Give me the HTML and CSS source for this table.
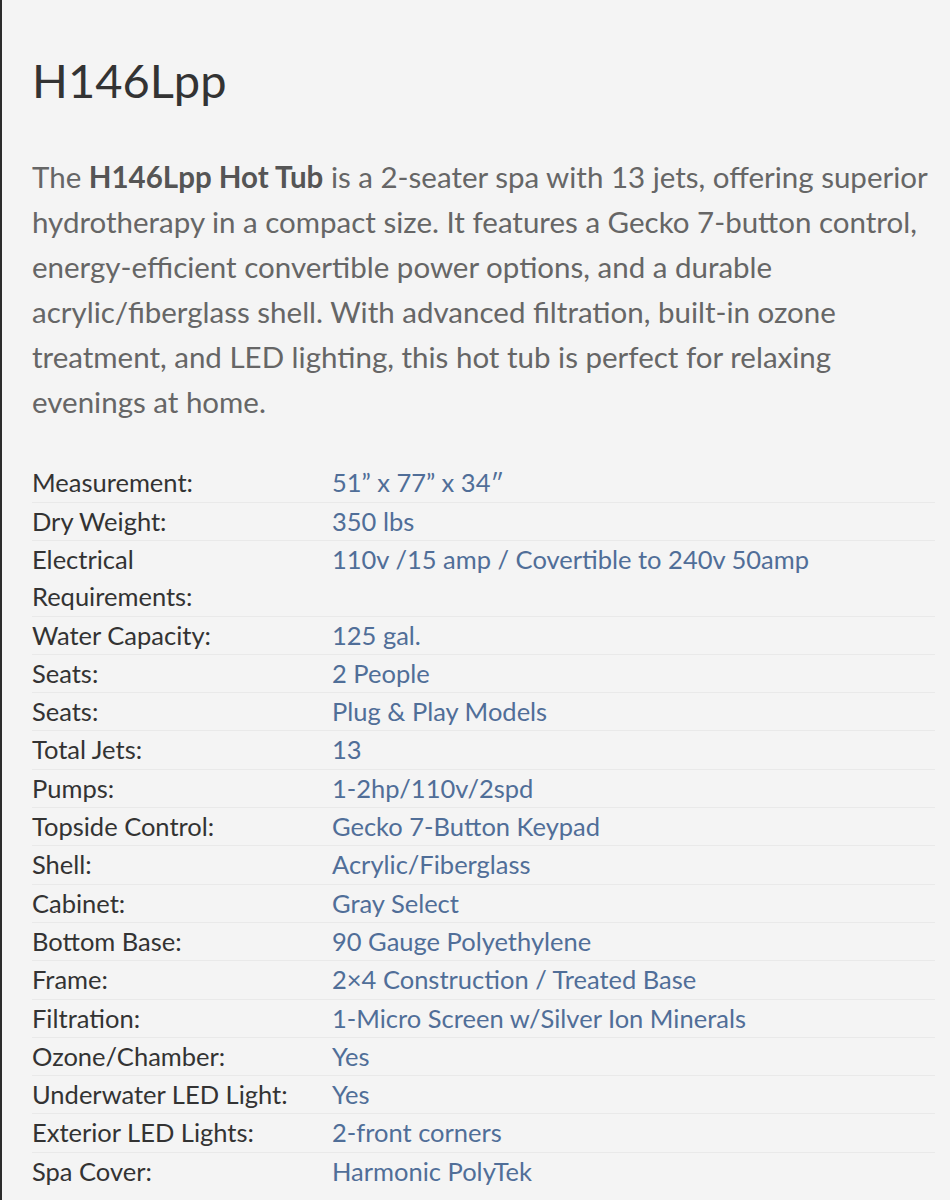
FILE: index.html
```html
<!DOCTYPE html>
<html lang="en">
<head>
  <meta charset="UTF-8" />
  <meta name="viewport" content="width=device-width, initial-scale=1" />
  <title>H146Lpp Hot Tub</title>
  <link rel="stylesheet" href="styles.css">
</head>
<body>
  <div class="container">
    <h1>H146Lpp</h1>
    <p class="descricao">
      The <strong>H146Lpp Hot Tub</strong> is a 2-seater spa with 13 jets, offering superior hydrotherapy in a compact size. It features a Gecko 7-button control, energy-efficient convertible power options, and a durable acrylic/fiberglass shell. With advanced filtration, built-in ozone treatment, and LED lighting, this hot tub is perfect for relaxing evenings at home.
    </p>

    <!-- Especificações -->
    <table class="specs">
      <tr><td>Measurement:</td><td>51” x 77” x 34″</td></tr>
      <tr><td>Dry Weight:</td><td>350 lbs</td></tr>
      <tr><td>Electrical Requirements:</td><td>110v /15 amp / Covertible to 240v 50amp</td></tr>
      <tr><td>Water Capacity:</td><td>125 gal.</td></tr>
      <tr><td>Seats:</td><td>2 People</td></tr>
      <tr><td>Seats:</td><td>Plug &amp; Play Models</td></tr>
      <tr><td>Total Jets:</td><td>13</td></tr>
      <tr><td>Pumps:</td><td>1-2hp/110v/2spd</td></tr>
      <tr><td>Topside Control:</td><td>Gecko 7-Button Keypad</td></tr>
      <tr><td>Shell:</td><td>Acrylic/Fiberglass</td></tr>
      <tr><td>Cabinet:</td><td>Gray Select</td></tr>
      <tr><td>Bottom Base:</td><td>90 Gauge Polyethylene</td></tr>
      <tr><td>Frame:</td><td>2×4 Construction / Treated Base</td></tr>
      <tr><td>Filtration:</td><td>1-Micro Screen w/Silver Ion Minerals</td></tr>
      <tr><td>Ozone/Chamber:</td><td>Yes</td></tr>
      <tr><td>Underwater LED Light:</td><td>Yes</td></tr>
      <tr><td>Exterior LED Lights:</td><td>2-front corners</td></tr>
      <tr><td>Spa Cover:</td><td>Harmonic PolyTek</td></tr>
    </table>
  </div>
</body>
</html>
```

FILE: styles.css
```css
body {
  background: #f4f4f4;
  font-family: Lato, 'Open Sans', sans-serif;
  color: #333;
  margin: 0;
  border-left: 2px solid #2b2b2b;
  min-height: 100vh;
}
.container {
  padding: 52px 15px 0 30px;
}
h1 {
  margin: 0 0 46px;
  font-size: 47px;
  font-weight: 400;
  line-height: 1.2;
  color: #333;
}
.descricao {
  font-size: 29.5px;
  line-height: 45px;
  color: #666;
  margin: 0 0 40px;
}
.descricao strong {
  color: #555;
  font-weight: 700;
}
.specs {
  width: 100%;
  border-collapse: collapse;
  font-size: 25.5px;
  line-height: 37.3px;
}
.specs td {
  padding: 0;
  vertical-align: top;
  border-bottom: 1px solid #e9e9e9;
}
.specs tr:last-child td {
  border-bottom: none;
}
.specs td:first-child {
  width: 268px;
  padding-right: 32px;
  color: #333;
}
.specs td:last-child {
  color: #506e98;
}
```
